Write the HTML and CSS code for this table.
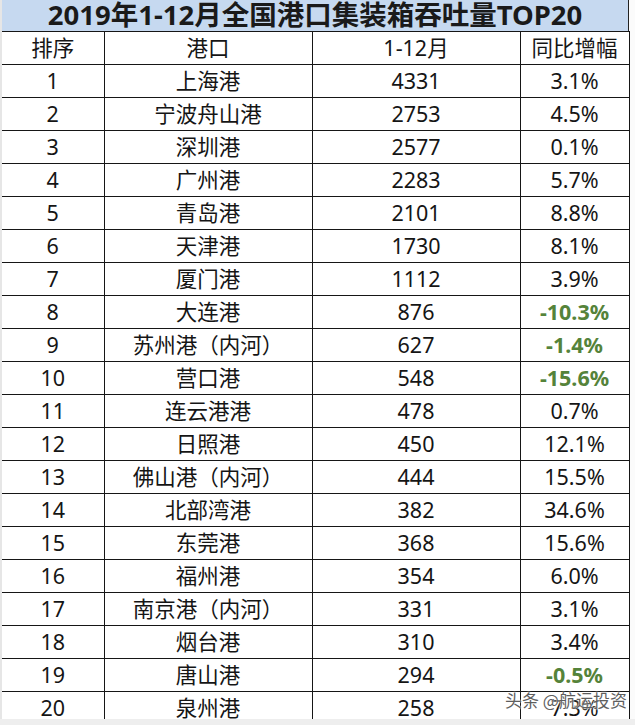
FILE: index.html
```html
<!DOCTYPE html>
<html lang="zh-CN">
<head>
<meta charset="utf-8">
<title>2019年1-12月全国港口集装箱吞吐量TOP20</title>
<link rel="stylesheet" href="styles.css">
</head>
<body>
<div class="frame">
  <div class="sheet">
    <div class="title">2019年1-12月全国港口集装箱吞吐量TOP20</div>
    <table class="grid">
      <colgroup><col class="c1"><col class="c2"><col class="c3"><col class="c4"></colgroup>
      <tr><td>排序</td><td>港口</td><td>1-12月</td><td>同比增幅</td></tr>
      <tr><td>1</td><td>上海港</td><td>4331</td><td>3.1%</td></tr>
      <tr><td>2</td><td>宁波舟山港</td><td>2753</td><td>4.5%</td></tr>
      <tr><td>3</td><td>深圳港</td><td>2577</td><td>0.1%</td></tr>
      <tr><td>4</td><td>广州港</td><td>2283</td><td>5.7%</td></tr>
      <tr><td>5</td><td>青岛港</td><td>2101</td><td>8.8%</td></tr>
      <tr><td>6</td><td>天津港</td><td>1730</td><td>8.1%</td></tr>
      <tr><td>7</td><td>厦门港</td><td>1112</td><td>3.9%</td></tr>
      <tr><td>8</td><td>大连港</td><td>876</td><td class="neg">-10.3%</td></tr>
      <tr><td>9</td><td>苏州港（内河）</td><td>627</td><td class="neg">-1.4%</td></tr>
      <tr><td>10</td><td>营口港</td><td>548</td><td class="neg">-15.6%</td></tr>
      <tr><td>11</td><td>连云港港</td><td>478</td><td>0.7%</td></tr>
      <tr><td>12</td><td>日照港</td><td>450</td><td>12.1%</td></tr>
      <tr><td>13</td><td>佛山港（内河）</td><td>444</td><td>15.5%</td></tr>
      <tr><td>14</td><td>北部湾港</td><td>382</td><td>34.6%</td></tr>
      <tr><td>15</td><td>东莞港</td><td>368</td><td>15.6%</td></tr>
      <tr><td>16</td><td>福州港</td><td>354</td><td>6.0%</td></tr>
      <tr><td>17</td><td>南京港（内河）</td><td>331</td><td>3.1%</td></tr>
      <tr><td>18</td><td>烟台港</td><td>310</td><td>3.4%</td></tr>
      <tr><td>19</td><td>唐山港</td><td>294</td><td class="neg">-0.5%</td></tr>
      <tr><td>20</td><td>泉州港</td><td>258</td><td>7.3%</td></tr>
    </table>
  </div>
  <div class="watermark">头条 @航运投资</div>
</div>
<div class="strip"></div>
</body>
</html>
```

FILE: styles.css
```css
html, body {
  margin: 0;
  padding: 0;
  background: #fbfbfb;
}
body {
  width: 635px;
  height: 725px;
  overflow: hidden;
  font-family: "Noto Sans", "Noto Sans CJK SC", sans-serif;
  color: #151515;
}
.frame {
  position: relative;
  height: 719px;
  overflow: hidden;
}
.sheet {
  width: 629px;
  background: #ffffff;
  border-left: 2px solid #e6e6e6;
  box-sizing: border-box;
}
.title {
  height: 31px;
  line-height: 30px;
  background: #c6d9f0;
  text-align: center;
  font-size: 27.5px;
  font-weight: 700;
  color: #1a1a1a;
  border-right: 1px solid #222;
  box-sizing: border-box;
  white-space: nowrap;
}
.grid {
  border-collapse: collapse;
  table-layout: fixed;
  width: 627px;
}
.c1 { width: 102px; }
.c2 { width: 208px; }
.c3 { width: 208px; }
.c4 { width: 109px; }
.grid td {
  height: 32px;
  padding: 0;
  border: 1px solid #161616;
  text-align: center;
  vertical-align: middle;
  font-size: 21.5px;
  line-height: 32px;
  white-space: nowrap;
}
.grid tr td:first-child {
  border-left: none;
}
.grid td.neg {
  color: #55833a;
  font-weight: 700;
}
.watermark {
  position: absolute;
  left: 505px;
  top: 688px;
  font-family: "Noto Sans CJK SC", sans-serif;
  font-size: 17px;
  line-height: 24px;
  color: #5e5e5e;
  text-shadow: 0 0 2px #fff, 0 0 2px #fff;
  white-space: nowrap;
}
.strip {
  height: 6px;
  background: #eeeeee;
}
```
